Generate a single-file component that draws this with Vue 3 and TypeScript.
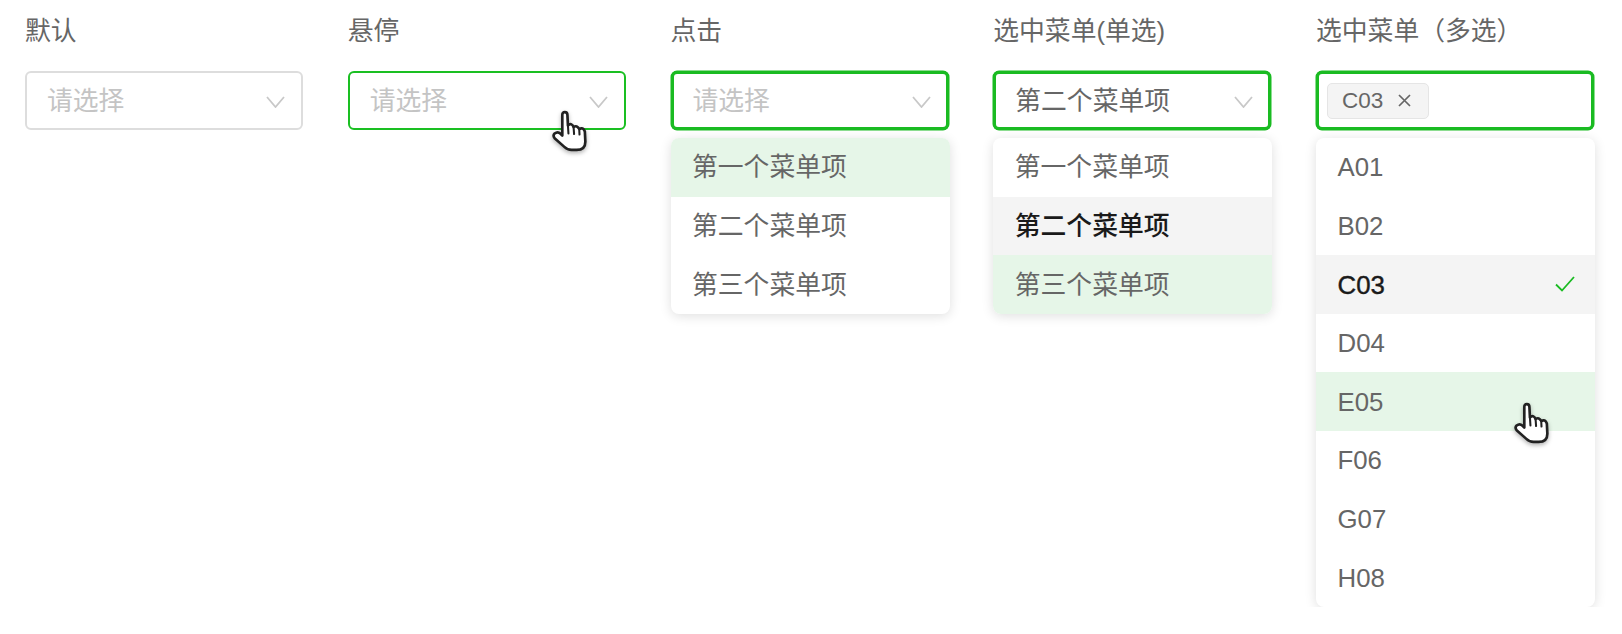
<script setup lang="ts">
interface Option { text: string; state?: 'hover' | 'selected'; check?: boolean }
interface Column {
  label: string
  state: 'default' | 'hover' | 'active'
  value?: string
  placeholder?: boolean
  tag?: string
  options?: Option[]
  cursor?: 'on-trigger' | 'on-menu'
}
const columns: Column[] = [
  { label: '默认', state: 'default', placeholder: true },
  { label: '悬停', state: 'hover', placeholder: true, cursor: 'on-trigger' },
  {
    label: '点击', state: 'active', placeholder: true,
    options: [{ text: '第一个菜单项', state: 'hover' }, { text: '第二个菜单项' }, { text: '第三个菜单项' }],
  },
  {
    label: '选中菜单(单选)', state: 'active', value: '第二个菜单项',
    options: [{ text: '第一个菜单项' }, { text: '第二个菜单项', state: 'selected' }, { text: '第三个菜单项', state: 'hover' }],
  },
  {
    label: '选中菜单（多选）', state: 'active', tag: 'C03', cursor: 'on-menu',
    options: [
      { text: 'A01' }, { text: 'B02' }, { text: 'C03', state: 'selected', check: true }, { text: 'D04' },
      { text: 'E05', state: 'hover' }, { text: 'F06' }, { text: 'G07' }, { text: 'H08' },
    ],
  },
]
</script>

<template>
  <div class="page">
    <section v-for="col in columns" :key="col.label" class="col">
      <div class="label">{{ col.label }}</div>
      <div class="trigger" :class="col.state">
        <span v-if="col.tag" class="tag">
          {{ col.tag }}
          <svg class="tag-x" width="13" height="13" viewBox="0 0 13 13"><path d="M1 1l11 11M12 1L1 12" /></svg>
        </span>
        <template v-else>
          <span class="value" :class="{ placeholder: col.placeholder }">{{ col.value || '请选择' }}</span>
          <svg class="chevron" width="19" height="12" viewBox="0 0 19 12"><path d="M1 1l8.5 10L18 1" /></svg>
        </template>
      </div>
      <ul v-if="col.options" class="menu">
        <li v-for="opt in col.options" :key="opt.text" class="option" :class="[opt.state, { checked: opt.check }]">
          <span class="option-text">{{ opt.text }}</span>
          <svg v-if="opt.check" class="check" width="20" height="16" viewBox="0 0 20 16"><path d="M1 8.5l6 6L19 1" /></svg>
        </li>
      </ul>
      <svg v-if="col.cursor" class="hand" :class="col.cursor" width="41" height="42" viewBox="0 0 38 41">
        <path class="hand-body" d="M11 25V5Q11 2 13.5 2T16 5L16.5 15Q20 12 22 16.5Q25.5 14.5 27.5 18.5Q31.5 16.5 33 21L33.5 31Q33.5 39 25 39H20Q16 39 13 36L3.5 27.5Q1.5 25 3.5 23Q6.5 20.5 9 23Z" />
        <path class="hand-line" d="M16.5 15L17 23M22 16.5L22.5 23.5M27.5 18.5L27.8 24" />
      </svg>
    </section>
  </div>
</template>

<style scoped>
.page {
  display: flex;
  gap: 44.75px;
  padding: 16px 0 0 25px;
  font-family: "Liberation Sans", "Noto Sans CJK SC", sans-serif;
  font-size: 25.8px;
  color: #666;
  background: #fff;
}
.col {
  position: relative;
  width: 278px;
  flex: none;
}
.label {
  height: 30px;
  line-height: 30px;
  white-space: nowrap;
  margin-bottom: 25px;
}
.trigger {
  box-sizing: border-box;
  height: 59px;
  display: flex;
  align-items: center;
  justify-content: space-between;
  border-radius: 6px;
  background: #fff;
}
.trigger.default { border: 2px solid #ddd; padding: 0 16px 0 20px; }
.trigger.hover { border: 2px solid #1abf22; padding: 0 16px 0 20px; }
.trigger.active {
  border: 3px solid #1abb22;
  box-shadow: 0 0 0 0.5px #1abb22;
  padding: 0 15px 0 19px;
}
.value { line-height: 1; position: relative; top: 1px; }
.placeholder { color: #c4c4c4; }
.chevron { fill: none; stroke: #c8c8c8; stroke-width: 1.8px; position: relative; top: 1px; }
.tag {
  box-sizing: border-box;
  display: inline-flex;
  align-items: center;
  gap: 15px;
  height: 36px;
  width: 102px;
  margin-left: -11px;
  padding-left: 14px;
  font-size: 22.5px;
  background: #f4f4f4;
  border: 1.5px solid #e5e5e5;
  border-radius: 5px;
}
.tag-x { fill: none; stroke: #666; stroke-width: 1.7px; }
.menu {
  list-style: none;
  margin: 8px 0 0;
  padding: 0;
  width: 279px;
  border-radius: 8px;
  overflow: hidden;
  background: #fff;
  box-shadow: 0 2px 12px rgba(0, 0, 0, 0.13);
}
.option {
  box-sizing: border-box;
  height: 58.6px;
  padding: 0 20px 0 21.5px;
  display: flex;
  align-items: center;
  justify-content: space-between;
}
.option-text { line-height: 1; position: relative; top: 1px; }
.option.hover { background: #e6f6e8; }
.option.selected {
  background: #f4f4f4;
  color: #1a1a1a;
  font-weight: 500;
}
.option.checked .option-text { -webkit-text-stroke: 0.4px #1a1a1a; }
.check { fill: none; stroke: #1abb22; stroke-width: 1.8px; }
.hand {
  position: absolute;
  overflow: visible;
  filter: drop-shadow(0 2px 2px rgba(0, 0, 0, 0.3));
}
.hand.on-trigger { left: 202px; top: 94px; }
.hand.on-menu { left: 196px; top: 386px; }
.hand-body { fill: #fff; stroke: #222; stroke-width: 2.6px; stroke-linejoin: round; }
.hand-line { fill: none; stroke: #222; stroke-width: 2px; stroke-linecap: round; }
</style>
